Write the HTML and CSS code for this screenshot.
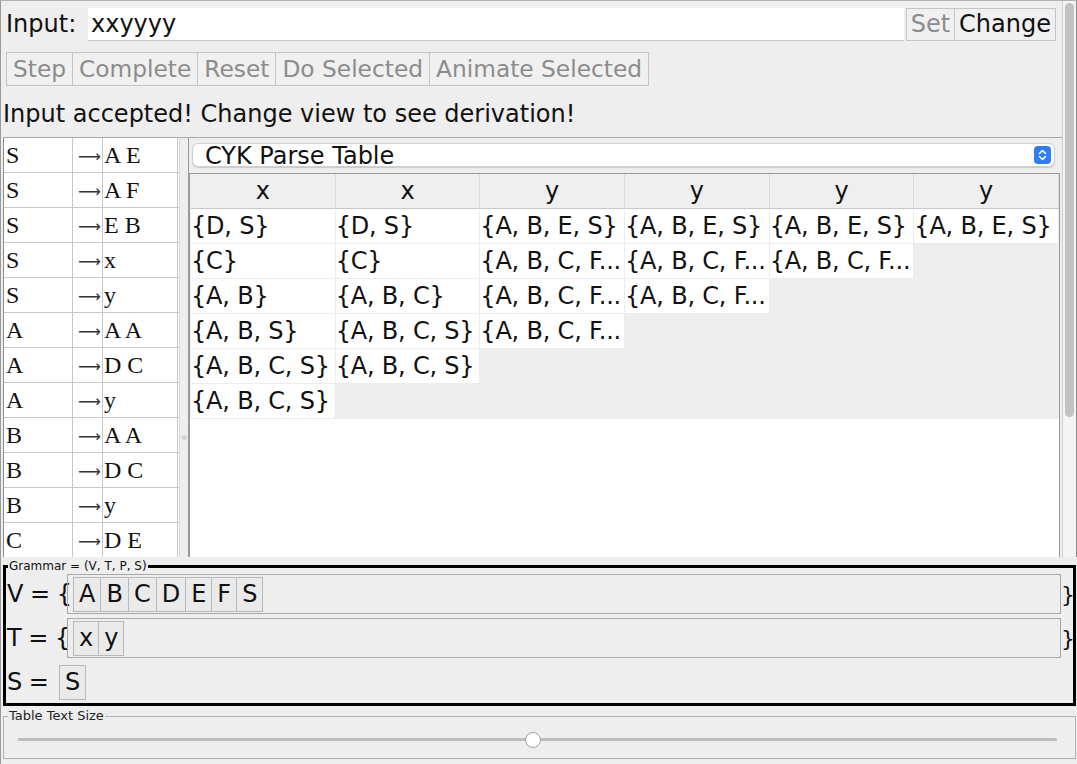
FILE: index.html
```html
<!DOCTYPE html>
<html>
<head>
<meta charset="utf-8">
<link rel="stylesheet" href="styles.css">
</head>
<body>
<div class="app">
  <div class="top">
    <div class="content">
      <div class="input-row">
        <span class="lbl">Input:</span>
        <div class="field">xxyyyy</div>
        <div class="btn dis">Set</div>
        <div class="btn">Change</div>
      </div>
      <div class="btn-row">
        <div class="btn dis">Step</div>
        <div class="btn dis">Complete</div>
        <div class="btn dis">Reset</div>
        <div class="btn dis">Do Selected</div>
        <div class="btn dis">Animate Selected</div>
      </div>
      <div class="status">Input accepted! Change view to see derivation!</div>
      <div class="split">
        <div class="prods">
          <div class="prow"><span class="c1">S</span><span class="c2">⟶</span><span class="c3">A E</span></div>
          <div class="prow"><span class="c1">S</span><span class="c2">⟶</span><span class="c3">A F</span></div>
          <div class="prow"><span class="c1">S</span><span class="c2">⟶</span><span class="c3">E B</span></div>
          <div class="prow"><span class="c1">S</span><span class="c2">⟶</span><span class="c3">x</span></div>
          <div class="prow"><span class="c1">S</span><span class="c2">⟶</span><span class="c3">y</span></div>
          <div class="prow"><span class="c1">A</span><span class="c2">⟶</span><span class="c3">A A</span></div>
          <div class="prow"><span class="c1">A</span><span class="c2">⟶</span><span class="c3">D C</span></div>
          <div class="prow"><span class="c1">A</span><span class="c2">⟶</span><span class="c3">y</span></div>
          <div class="prow"><span class="c1">B</span><span class="c2">⟶</span><span class="c3">A A</span></div>
          <div class="prow"><span class="c1">B</span><span class="c2">⟶</span><span class="c3">D C</span></div>
          <div class="prow"><span class="c1">B</span><span class="c2">⟶</span><span class="c3">y</span></div>
          <div class="prow"><span class="c1">C</span><span class="c2">⟶</span><span class="c3">D E</span></div>
        </div>
        <div class="divider"><span class="dot"></span></div>
        <div class="right">
          <div class="combo">
            <span>CYK Parse Table</span>
            <span class="stepper">
              <svg width="17" height="18" viewBox="0 0 17 18"><rect x="0" y="0" width="17" height="18" rx="4" fill="#2f7df6"/><path d="M5.5 7.5 L8.5 4.5 L11.5 7.5 M5.5 10.5 L8.5 13.5 L11.5 10.5" fill="none" stroke="#fff" stroke-width="1.6" stroke-linecap="round" stroke-linejoin="round"/></svg>
            </span>
          </div>
          <div class="cyk">
            <div class="hdr">x</div><div class="hdr">x</div><div class="hdr">y</div><div class="hdr">y</div><div class="hdr">y</div><div class="hdr">y</div>
            <div class="cell">{D, S}</div><div class="cell">{D, S}</div><div class="cell">{A, B, E, S}</div><div class="cell">{A, B, E, S}</div><div class="cell">{A, B, E, S}</div><div class="cell">{A, B, E, S}</div>
            <div class="cell">{C}</div><div class="cell">{C}</div><div class="cell">{A, B, C, F...</div><div class="cell">{A, B, C, F...</div><div class="cell">{A, B, C, F...</div><div class="empty"></div>
            <div class="cell">{A, B}</div><div class="cell">{A, B, C}</div><div class="cell">{A, B, C, F...</div><div class="cell">{A, B, C, F...</div><div class="empty"></div><div class="empty"></div>
            <div class="cell">{A, B, S}</div><div class="cell">{A, B, C, S}</div><div class="cell">{A, B, C, F...</div><div class="empty"></div><div class="empty"></div><div class="empty"></div>
            <div class="cell">{A, B, C, S}</div><div class="cell">{A, B, C, S}</div><div class="empty"></div><div class="empty"></div><div class="empty"></div><div class="empty"></div>
            <div class="cell">{A, B, C, S}</div><div class="empty"></div><div class="empty"></div><div class="empty"></div><div class="empty"></div><div class="empty"></div>
          </div>
        </div>
      </div>
    </div>
    <div class="scrollbar"><div class="thumb"></div></div>
  </div>
  <fieldset class="grammar">
    <legend>Grammar = (V, T, P, S)</legend>
    <div class="grow">
      <span class="glbl">V = {</span>
      <div class="set">
        <span class="tile">A</span><span class="tile">B</span><span class="tile">C</span><span class="tile">D</span><span class="tile">E</span><span class="tile">F</span><span class="tile">S</span>
      </div>
      <span class="close">}</span>
    </div>
    <div class="grow">
      <span class="glbl">T = {</span>
      <div class="set">
        <span class="tile">x</span><span class="tile">y</span>
      </div>
      <span class="close">}</span>
    </div>
    <div class="grow srow">
      <span class="glbl">S =</span>
      <span class="tile single">S</span>
    </div>
  </fieldset>
  <fieldset class="slider">
    <legend>Table Text Size</legend>
    <div class="track"><span class="knob"></span></div>
  </fieldset>
</div>
</body>
</html>
```
FILE: styles.css
```css
html, body {
  margin: 0;
  padding: 0;
}
body {
  width: 1077px;
  height: 764px;
  overflow: hidden;
  background: #eeeeee;
  font-family: "DejaVu Sans", sans-serif;
  color: #111;
}
.app {
  width: 1077px;
  height: 764px;
  box-sizing: border-box;
  border-left: 1px solid #9a9a9a;
  border-top: 1px solid #b0b0b0;
  display: flex;
  flex-direction: column;
}
.top {
  display: flex;
  height: 556px;
  flex: none;
}
.content {
  width: 1061px;
  display: flex;
  flex-direction: column;
}
.input-row {
  display: flex;
  align-items: stretch;
  height: 33px;
  margin-top: 7px;
  margin-right: 6px;
}
.lbl {
  font-size: 24px;
  line-height: 33px;
  padding-left: 5px;
  width: 82px;
  flex: none;
}
.field {
  flex: 1;
  background: #fff;
  border-bottom: 1px solid #c8c8c8;
  font-size: 24px;
  line-height: 33px;
  padding-left: 3px;
  box-sizing: border-box;
  height: 33px;
  margin-right: 3px;
}
.btn {
  border: 1px solid #c4c4c4;
  background: #f0f0f0;
  font-size: 24px;
  line-height: 31px;
  padding: 0 4px;
  color: #111;
  margin-left: -1px;
}
.btn.dis {
  color: #8c8c8c;
}
.btn-row {
  display: flex;
  height: 34px;
  margin-top: 11px;
  padding-left: 6px;
}
.btn-row .btn {
  line-height: 32px;
  font-size: 23.3px;
  padding: 0 6px;
}
.status {
  font-size: 24px;
  line-height: 30px;
  height: 51px;
  padding-left: 2px;
  padding-top: 13px;
  box-sizing: border-box;
}
.split {
  display: flex;
  margin-left: 2px;
  border-top: 1px solid #a8a8a8;
  flex: 1;
  overflow: hidden;
}
.prods {
  width: 175px;
  background: #fff;
  border-left: 1px solid #8a8a8a;
  flex: none;
}
.prow {
  display: flex;
  height: 35px;
  border-bottom: 1px solid #c8c8c8;
  box-sizing: border-box;
  font-family: "Liberation Serif", serif;
  font-size: 24px;
  line-height: 34px;
}
.c1 {
  width: 69px;
  padding-left: 2px;
  border-right: 1px solid #c8c8c8;
  box-sizing: border-box;
}
.c2 {
  width: 30px;
  text-align: right;
  border-right: 1px solid #c8c8c8;
  box-sizing: border-box;
  padding-right: 1px;
  padding-top: 2px;
  font-family: "DejaVu Sans", sans-serif;
  font-size: 16px;
  color: #333;
  overflow: hidden;
  white-space: nowrap;
}
.c3 {
  width: 75px;
  padding-left: 1px;
  border-right: 1px solid #c8c8c8;
  box-sizing: border-box;
}
.divider {
  width: 10px;
  flex: none;
  background: #eeeeee;
  border-left: 1px solid #d8d8d8;
  display: flex;
  align-items: center;
  justify-content: center;
  box-sizing: border-box;
  border-right: 1px solid #9a9a9a;
}
.dot {
  width: 5px;
  height: 5px;
  border-radius: 50%;
  background: #d4d4d4;
  margin-top: 180px;
}
.right {
  flex: 1;
  display: flex;
  flex-direction: column;
}
.combo {
  margin: 5px 7px 0 3px;
  height: 22px;
  background: #fff;
  border: 1px solid #d0d0d0;
  border-radius: 6px;
  display: flex;
  align-items: center;
  justify-content: space-between;
  font-size: 24px;
  padding-left: 12px;
  padding-right: 3px;
  box-shadow: 0 1px 1px #c8c8c8;
}
.combo span:first-child {
  line-height: 22px;
  margin-top: 1px;
}
.stepper {
  display: flex;
}
.cyk {
  margin-top: 6px;
  margin-right: 2px;
  border: 1px solid #9a9a9a;
  border-bottom: none;
  flex: 1;
  display: grid;
  grid-template-columns: repeat(6, 1fr);
  grid-auto-rows: 35px;
  align-content: start;
  background: linear-gradient(#eeeeee, #eeeeee) top / 100% 245px no-repeat, #ffffff;
  padding-left: 1px;
}
.hdr {
  font-size: 24px;
  text-align: center;
  line-height: 34px;
  background: #efefef;
  border-bottom: 1px solid #c8c8c8;
  border-right: 1px solid #dcdcdc;
}
.cell {
  font-size: 24px;
  line-height: 34px;
  background: #fff;
  border-right: 1px solid #ececec;
  border-bottom: 1px solid #ececec;
  white-space: nowrap;
  overflow: hidden;
  letter-spacing: -0.2px;
}
.empty {
  background: #eeeeee;
}
.scrollbar {
  width: 15px;
  flex: none;
  background: #f4f4f4;
  border-left: 1px solid #cfcfcf;
  border-right: 1px solid #8a8a8a;
  box-sizing: border-box;
  padding: 2px 2px 0 2px;
}
.thumb {
  height: 414px;
  background: #c2c2c2;
  border-radius: 5px;
}
.grammar {
  margin: 3px 1px 0 2px;
  border: 3px solid #000;
  padding: 0 0 4px 0;
  height: 146px;
  box-sizing: border-box;
}
.grammar legend {
  font-size: 12px;
  padding: 0 1px;
  margin-left: 2px;
  line-height: 12px;
}
.grow {
  display: flex;
  align-items: center;
  height: 40px;
  margin-top: 2px;
}
.grow + .grow {
  margin-top: 4px;
}
.glbl {
  font-size: 24px;
  width: 58px;
  padding-left: 1px;
  white-space: nowrap;
  flex: none;
  letter-spacing: -0.5px;
}
.set {
  flex: 1;
  height: 40px;
  border: 1px solid #a8a8a8;
  box-sizing: border-box;
  display: flex;
  align-items: center;
  padding-left: 5px;
  margin-left: 2px;
}
.tile {
  font-size: 24px;
  line-height: 33px;
  height: 35px;
  box-sizing: border-box;
  border: 1px solid #b8b8b8;
  background: #eaeaea;
  padding: 0 5px;
  margin-right: -1px;
}
.close {
  font-size: 22px;
  width: 12px;
  text-align: center;
}
.srow .glbl {
  width: 52px;
}
.tile.single {
  margin-left: 0;
}
.slider {
  margin: 3px 1px 0 2px;
  border: 1px solid #b0b0b0;
  padding: 0;
  height: 50px;
  box-sizing: border-box;
}
.slider legend {
  font-size: 13px;
  padding: 0 1px;
  margin-left: 4px;
  line-height: 14px;
  color: #222;
}
.track {
  margin: 15px 18px 0 14px;
  height: 3px;
  background: #bdbdbd;
  border-radius: 2px;
  display: flex;
  align-items: center;
  padding-left: 507px;
}
.knob {
  width: 16px;
  height: 16px;
  border-radius: 50%;
  background: #fff;
  border: 1px solid #a0a0a0;
  box-sizing: border-box;
  flex: none;
}
```
